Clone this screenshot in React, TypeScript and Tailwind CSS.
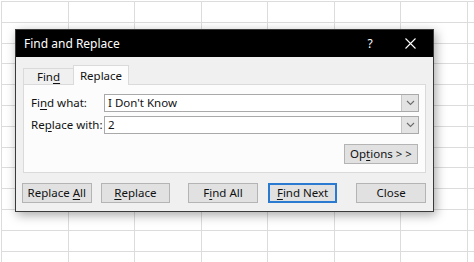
import React from 'react';

const font = { fontFamily: '"Noto Sans", "Open Sans", sans-serif' };

// underline one access-key letter, like the Windows dialog does
const Key = ({ label, k }: { label: string; k: number }) => (
  <span className="whitespace-pre">
    {label.slice(0, k)}
    <span className="underline underline-offset-2">{label[k]}</span>
    {label.slice(k + 1)}
  </span>
);

const Chevron = () => (
  <svg width="9" height="6" viewBox="0 0 9 6" fill="none">
    <path d="M1 1l3.5 3.5L8 1" stroke="#6b6b6b" strokeWidth="1.1" />
  </svg>
);

const Combo = ({ value }: { value: string }) => (
  <div className="flex-1 h-[18px] flex items-center border border-[#a9a9a9] bg-white">
    <span className="flex-1 pl-[3px] text-[11.5px] leading-none text-[#111]">{value}</span>
    <div className="w-[17px] h-[16px] flex items-center justify-center bg-[#e3e3e3] border-l border-[#c6c6c6]">
      <Chevron />
    </div>
  </div>
);

const Btn = ({ children, focus, className = '' }: { children: React.ReactNode; focus?: boolean; className?: string }) => (
  <div
    className={`w-[70px] h-[20px] flex items-center justify-center text-[11.5px] leading-none text-[#111] bg-[#e1e1e1] ${
      focus ? 'border-2 border-[#2a7ad2]' : 'border border-[#b4b4b4]'
    } ${className}`}
  >
    {children}
  </div>
);

export default function App() {
  const cols = Array.from({ length: 8 });
  const rows = Array.from({ length: 13 });

  return (
    <div className="relative w-[474px] h-[262px] overflow-hidden bg-white" style={font}>
      {/* spreadsheet behind the dialog */}
      <div className="ml-[1px] mt-[1px] grid grid-cols-[repeat(8,66.5px)]">
        {rows.map((_, r) =>
          cols.map((_, c) => (
            <div key={`${r}-${c}`} className="h-[20.8px] border-l border-t border-[#dcdcdc]" />
          ))
        )}
      </div>

      {/* Find and Replace dialog */}
      <div className="absolute left-[15px] top-[29px] w-[419px] h-[183px] border border-[#3a3a3a] bg-[#f0f0f0] shadow-[2px_3px_10px_rgba(0,0,0,0.35)] flex flex-col">
        <div className="h-[27px] bg-black flex items-center pl-[8px] text-white text-[12px]">
          <span className="flex-1">Find and Replace</span>
          <span className="w-[14px] text-center text-[12px] mr-[28px]">?</span>
          <svg width="11" height="11" viewBox="0 0 11 11" className="mr-[17px]">
            <path d="M0.5 0.5l10 10M10.5 0.5l-10 10" stroke="#fff" strokeWidth="1.1" />
          </svg>
        </div>

        <div className="px-[7px] pt-[8px]">
          {/* tabs */}
          <div className="flex items-end h-[19px]">
            <div className="w-[50px] h-[16px] flex items-center justify-center border-t border-l border-[#dadada] text-[11.5px] leading-none text-[#111]">
              <Key label="Find" k={3} />
            </div>
            <div className="w-[56px] h-[20px] -mb-[1px] flex items-center justify-center border-t border-l border-r border-[#dadada] bg-[#fcfcfc] text-[11.5px] leading-none text-[#111] relative z-10">
              Replace
            </div>
          </div>

          {/* panel */}
          <div className="h-[89px] border border-[#dadada] bg-[#fcfcfc] pl-[7px] pr-[6px] pt-[9px] flex flex-col">
            <div className="flex items-center">
              <span className="w-[73px] text-[11.5px] leading-none text-[#111]">
                <Key label="Find what:" k={2} />
              </span>
              <Combo value="I Don't Know" />
            </div>
            <div className="flex items-center mt-[4px]">
              <span className="w-[73px] text-[11.5px] leading-none text-[#111]">
                <Key label="Replace with:" k={2} />
              </span>
              <Combo value="2" />
            </div>
            <div className="flex justify-end mt-[10px] pr-[1px]">
              <Btn className="w-[74px]">
                <Key label="Options > >" k={2} />
              </Btn>
            </div>
          </div>

          {/* action buttons */}
          <div className="flex mt-[10px] -ml-[1px]">
            <Btn>
              <Key label="Replace All" k={8} />
            </Btn>
            <Btn className="ml-[9px]">
              <Key label="Replace" k={0} />
            </Btn>
            <Btn className="ml-[18px] w-[69px]">
              <Key label="Find All" k={1} />
            </Btn>
            <Btn focus className="ml-[10px]">
              <Key label="Find Next" k={0} />
            </Btn>
            <Btn className="ml-[19px]">Close</Btn>
          </div>
        </div>
      </div>
    </div>
  );
}
